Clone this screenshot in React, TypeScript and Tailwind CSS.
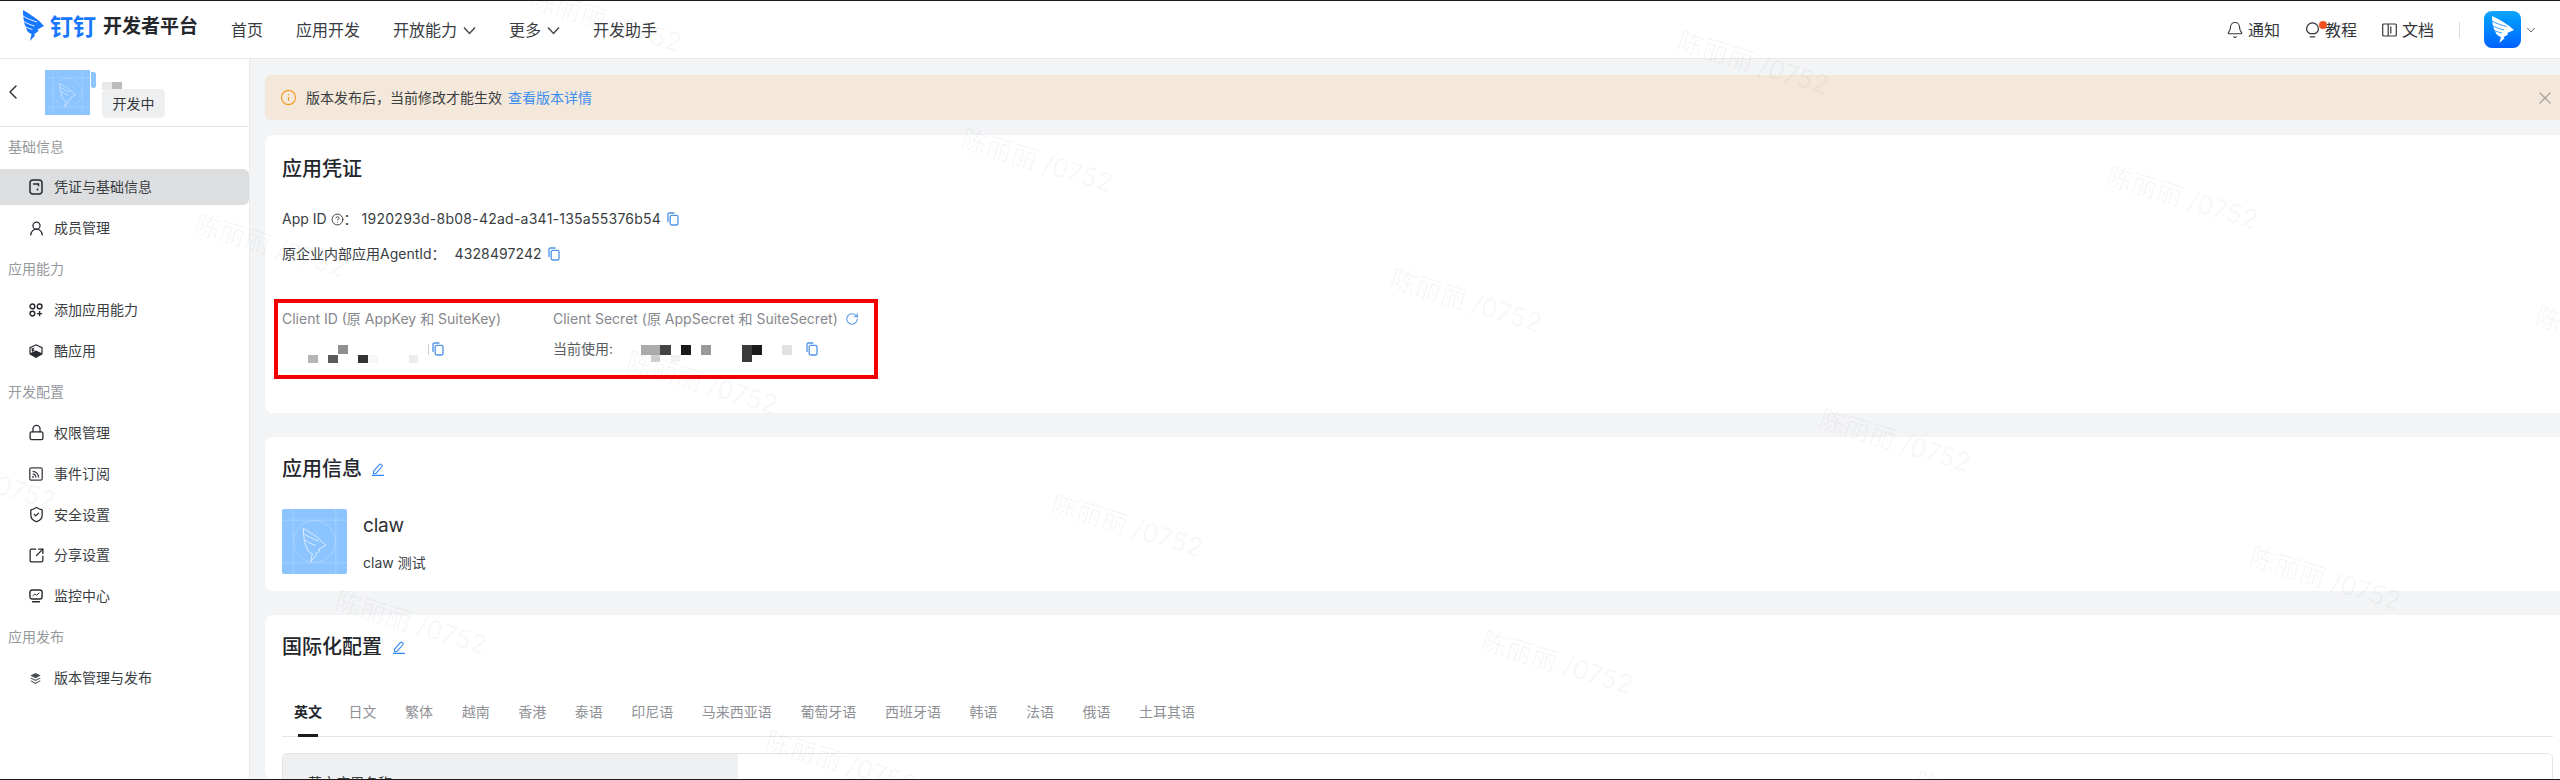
import React from "react";
import { Bell, ChevronLeft, CircleHelp, Info, Lock, RotateCw, ShieldCheck, SquareArrowOutUpRight, UserRound, X } from "lucide-react";

const wing = "M0 0C7 4 15 9 21 16L14.5 19.5L15.5 21L11 24.5L12 25.5L7 31L8.5 24C5.5 23 4 21 3.5 19C2.5 17 1.5 14 1 11.5C.3 7.5 0 3.5 0 0Z";
const slits = "M-1 5.5C4 8.5 9 10.5 14 12M0 11C4 13.5 8 15 11.5 16M2 16.5C4.5 18 7 19 9.5 19.5";

function Wing({ className, fill, cut }: { className: string; fill: string; cut: string }) {
  return (
    <svg viewBox="0 0 21 31" className={className} preserveAspectRatio="none">
      <path d={wing} fill={fill} />
      <path d={slits} fill="none" stroke={cut} strokeWidth=".9" />
    </svg>
  );
}

function Tile({ className }: { className: string }) {
  return (
    <svg viewBox="0 0 64 64" className={className}>
      <rect width="64" height="64" fill="#8cc4ff" />
      <g stroke="#ffffff" strokeOpacity=".28" strokeWidth=".8" fill="none">
        <path d="M11 0V64M53 0V64M0 11H64M0 53H64" />
        <circle cx="32" cy="32" r="20.5" />
      </g>
      <g transform="translate(21 19) scale(1.05)" stroke="#ffffff" strokeOpacity=".7" strokeWidth=".9" fill="none">
        <path d={wing} />
        <path d="M1 5.5C5 8 9 10 14 12M1.5 11C5 13.5 8 15 11.5 16" />
      </g>
    </svg>
  );
}

function Caret({ className, color }: { className: string; color: string }) {
  return (
    <svg viewBox="0 0 13 9" className={className} fill="none" stroke={color} strokeWidth="1.4">
      <path d="M1 1.5 6.5 7.5 12 1.5" />
    </svg>
  );
}

function CopyIcon() {
  return (
    <svg viewBox="0 0 12 14" className="h-[14px] w-[12px] shrink-0" fill="none" stroke="#4f93e6" strokeWidth="1.3">
      <path d="M1 9.5V2.2C1 1.5 1.5 1 2.2 1H7" strokeLinecap="round" />
      <rect x="3.2" y="3.4" width="7.8" height="9.6" rx="1.6" />
    </svg>
  );
}

function EditIcon() {
  return (
    <svg viewBox="0 0 12 13" className="h-[13px] w-[12px] shrink-0" fill="none" stroke="#2f86f0" strokeWidth="1.1">
      <path d="M1.6 8.2 7.6 1.4c.4-.4 1-.4 1.4-.1l.9.8c.4.4.4 1 .1 1.4L4 10.3l-2.6.4z" strokeLinejoin="round" />
      <path d="M.5 12.4h11" strokeLinecap="round" />
    </svg>
  );
}

function CredIcon() {
  return (
    <svg viewBox="0 0 14 16" className="h-[16px] w-[14px]" fill="none" stroke="#26292e" strokeWidth="1.5">
      <rect x="1" y="1" width="12" height="14" rx="3" />
      <path d="M4 5h5.5v2.2" />
      <circle cx="8.5" cy="10.5" r="1" fill="#26292e" stroke="none" />
    </svg>
  );
}

function AddIcon() {
  return (
    <svg viewBox="0 0 14 14" className="h-[14px] w-[14px]" fill="none" stroke="#26292e" strokeWidth="1.4">
      <circle cx="3.4" cy="3.4" r="2.4" />
      <circle cx="10.6" cy="3.4" r="2.4" />
      <circle cx="3.4" cy="10.6" r="2.4" />
      <path d="M10.6 8v5.2M8 10.6h5.2" />
    </svg>
  );
}

function CubeIcon() {
  return (
    <svg viewBox="0 0 14 14" className="h-[14px] w-[14px]">
      <path d="M7 .8 13 3.6V10L7 13.2 1 10V3.6z" fill="none" stroke="#26292e" strokeWidth="1.2" />
      <path d="M1 9.2 7 6.6 13 9.2V10L7 13.2 1 10z" fill="#26292e" />
      <path d="M2.5 4.5 5.8 3.4 4.2 5.6 6 6 3 8z" fill="#26292e" />
    </svg>
  );
}

function RssIcon() {
  return (
    <svg viewBox="0 0 14 14" className="h-[14px] w-[14px]" fill="none" stroke="#3a3d42" strokeWidth="1.3">
      <rect x=".8" y=".8" width="12.4" height="12.4" rx="1.6" />
      <path d="M3.6 4.4c3.3 0 6 2.7 6 6M3.6 7.2c1.8 0 3.2 1.4 3.2 3.2" />
      <circle cx="4" cy="10" r=".9" fill="#3a3d42" stroke="none" />
    </svg>
  );
}

function MonitorIcon() {
  return (
    <svg viewBox="0 0 14 14" className="h-[14px] w-[14px]" fill="none" stroke="#26292e" strokeWidth="1.4">
      <rect x=".9" y="1" width="12.2" height="9" rx="2.2" />
      <path d="M3.6 7 5.8 5l1.6 1.2L10.4 3.8" strokeWidth="1" />
      <path d="M3.5 12.8h7" strokeLinecap="round" />
    </svg>
  );
}

function LayersIcon() {
  return (
    <svg viewBox="0 0 14 14" className="h-[13px] w-[13px]" fill="#4a4d52">
      <path d="M7 1 12.6 3.8 7 6.6 1.4 3.8z" />
      <path d="M2.4 6.1 1.4 6.8 7 9.6l5.6-2.8-1-.7L7 8.3z" />
      <path d="M2.4 9.1 1.4 9.8 7 12.8l5.6-3-1-.7L7 11.5z" />
    </svg>
  );
}

function BookIcon() {
  return (
    <svg viewBox="0 0 15 14" className="h-[14px] w-[15px]" fill="none" stroke="#33363b" strokeWidth="1.2">
      <rect x=".7" y="1" width="13.6" height="12" rx="1" />
      <path d="M6.2 1v12M8.8 3.5v7" />
    </svg>
  );
}

function BulbIcon() {
  return (
    <svg viewBox="0 0 15 16" className="h-[16px] w-[15px]" fill="none" stroke="#33363b" strokeWidth="1.3">
      <path d="M5 11.6C2.8 10.700 1.600 8.800 1.600 6.800a5.900 5.900 0 0 1 11.800 0c0 2-1.200 3.900-3.400 4.800z" strokeLinejoin="round" />
      <path d="M5.300 14.800h4.400" strokeLinecap="round" />
    </svg>
  );
}

const ic = "-ml-[1.5px] h-[17px] w-[17px] text-[#26292e]";

const groups: { label: string; items: { text: string; icon: React.ReactNode; active?: boolean }[] }[] = [
  {
    label: "基础信息",
    items: [
      { text: "凭证与基础信息", icon: <CredIcon />, active: true },
      { text: "成员管理", icon: <UserRound className={ic} strokeWidth={1.8} /> },
    ],
  },
  {
    label: "应用能力",
    items: [
      { text: "添加应用能力", icon: <AddIcon /> },
      { text: "酷应用", icon: <CubeIcon /> },
    ],
  },
  {
    label: "开发配置",
    items: [
      { text: "权限管理", icon: <Lock className={ic} strokeWidth={1.8} /> },
      { text: "事件订阅", icon: <RssIcon /> },
      { text: "安全设置", icon: <ShieldCheck className={ic} strokeWidth={1.8} /> },
      { text: "分享设置", icon: <SquareArrowOutUpRight className={ic} strokeWidth={1.8} /> },
      { text: "监控中心", icon: <MonitorIcon /> },
    ],
  },
  {
    label: "应用发布",
    items: [{ text: "版本管理与发布", icon: <LayersIcon /> }],
  },
];

const tabs = ["英文", "日文", "繁体", "越南", "香港", "泰语", "印尼语", "马来西亚语", "葡萄牙语", "西班牙语", "韩语", "法语", "俄语", "土耳其语"];

const marks = [
  [606, 20], [1037, 160], [1466, 300], [1895, 440], [2325, 578],
  [1753, 62], [2182, 197], [2611, 337],
  [270, 245], [702, 382], [1127, 525], [1557, 662], [1990, 803],
  [-20, 478], [411, 622], [841, 762],
];

function NavItem({ text, caret }: { text: string; caret?: boolean }) {
  return (
    <div className="flex items-center gap-[6px]">
      <span>{text}</span>
      {caret && <Caret className="mt-[2px] h-[9px] w-[13px]" color="#44474c" />}
    </div>
  );
}

function ToolItem({ icon, text }: { icon: React.ReactNode; text: string }) {
  return (
    <div className="relative flex items-center gap-[5px]">
      {icon}
      <span>{text}</span>
    </div>
  );
}

export default function App() {
  return (
    <div className="relative h-[780px] w-[2560px] overflow-hidden border-y border-[#1c1c1c] bg-[#f3f4f6] font-['Inter','Noto_Sans_CJK_SC',sans-serif] text-[14px] leading-[22px] text-[#3a3d42]">
      <header className="flex h-[58px] items-center border-b border-[#e8e9eb] bg-white pl-[23px] pr-[24px]">
        <div className="flex items-center">
          <Wing className="mb-[8px] h-[31px] w-[21px]" fill="#1677ff" cut="#ffffff" />
          <span className="mb-[5px] ml-[6px] text-[23px] leading-[28px] font-bold tracking-[0px] text-[#1677ff]">钉钉</span>
          <span className="mb-[5px] ml-[7px] text-[19px] leading-[28px] font-semibold text-[#23262b]">开发者平台</span>
        </div>
        <nav className="ml-[33px] flex items-center gap-[33px] text-[16px] text-[#3a3d42]">
          <NavItem text="首页" />
          <NavItem text="应用开发" />
          <NavItem text="开放能力" caret />
          <NavItem text="更多" caret />
          <NavItem text="开发助手" />
        </nav>
        <div className="ml-auto flex items-center gap-[25px] text-[16px] text-[#33363b]">
          <ToolItem icon={<Bell className="-mx-[1.5px] h-[18px] w-[18px]" strokeWidth={1.5} />} text="通知" />
          <div className="relative">
            <ToolItem icon={<BulbIcon />} text="教程" />
            <span className="absolute left-[14px] top-[2px] h-[8px] w-[8px] rounded-full bg-[#f4511e]" />
          </div>
          <ToolItem icon={<BookIcon />} text="文档" />
          <div className="flex items-center">
            <span className="h-[16px] w-px bg-[#d9dadc]" />
            <div className="ml-[24px] flex h-[37px] w-[37px] items-center justify-center rounded-[8px] bg-gradient-to-b from-[#12a5ff] to-[#0060ff]">
              <Wing className="h-[27px] w-[22px]" fill="#ffffff" cut="#1f8cff" />
            </div>
            <Caret className="ml-[5px] h-[6px] w-[10px]" color="#55585d" />
          </div>
        </div>
      </header>

      <div className="flex h-[720px]">
        <aside className="h-full w-[250px] shrink-0 border-r border-[#e9eaec] bg-white">
          <div className="flex h-[68px] border-b border-[#e4e5e7] pl-[1px]">
            <ChevronLeft className="mt-[21px] h-[24px] w-[24px] text-[#33363b]" strokeWidth={1.5} />
            <div className="ml-[20px] mt-[11px] flex items-start">
              <Tile className="h-[45px] w-[45px]" />
              <span className="ml-px mt-[2px] h-[16px] w-[5px] rounded-r-full rounded-bl-full bg-[#8cc4ff]" />
              <div className="ml-[6px] flex flex-col">
                <div className="mt-[12px] flex h-[8px] w-[20px]">
                  <span className="h-full w-1/2 bg-[#e8e8e8]" />
                  <span className="h-full w-1/2 bg-[#bcbcbc]" />
                </div>
                <span className="-mt-px flex h-[29px] w-[63px] items-center justify-center rounded-[5px] bg-[#eeeff1] text-[#33363b]">开发中</span>
              </div>
            </div>
          </div>
          <nav className="flex flex-col gap-[4.9px] pt-[1.5px]">
            {groups.map((g) => (
              <React.Fragment key={g.label}>
                <div className="flex h-[36px] items-center pl-[8px] text-[#96999e]">{g.label}</div>
                {g.items.map((it) => (
                  <div
                    key={it.text}
                    className={`flex h-[36px] items-center rounded-r-[6px] pl-[29px] ${it.active ? "bg-[#dddee0]" : ""}`}
                  >
                    <span className="flex w-[25px] shrink-0 items-center">{it.icon}</span>
                    <span className="text-[#3a3d42]">{it.text}</span>
                  </div>
                ))}
              </React.Fragment>
            ))}
          </nav>
        </aside>

        <main className="flex min-w-0 flex-1 flex-col gap-[24px] overflow-hidden pl-[15px] pt-[16px]">
          <div className="-mb-[9px] flex h-[45px] shrink-0 items-center rounded-l-[6px] bg-[#f3e8d9] pl-[15px] pr-[5px]">
            <Info className="h-[17px] w-[17px] text-[#f59a23]" strokeWidth={1.6} />
            <span className="ml-[9px]">版本发布后，当前修改才能生效</span>
            <span className="ml-[6px] text-[#3d8ef0]">查看版本详情</span>
            <X className="ml-auto h-[20px] w-[20px] text-[#a9a49c]" strokeWidth={1.5} />
          </div>

          <section className="h-[278px] shrink-0 rounded-l-[8px] bg-white pl-[17px] pt-[20px]">
            <h2 className="text-[20px] font-medium leading-[28px] text-[#23262b]">应用凭证</h2>
            <div className="mt-[25px] flex h-[22px] items-center">
              <span>App ID</span>
              <CircleHelp className="ml-[4px] h-[13px] w-[13px]" strokeWidth={1.8} />
              <span className="w-[18px]">：</span>
              <span className="tracking-[0.25px]">1920293d-8b08-42ad-a341-135a55376b54</span>
              <span className="ml-[6px]"><CopyIcon /></span>
            </div>
            <div className="mt-[13px] flex h-[22px] items-center">
              <span>原企业内部应用AgentId：</span>
              <span className="ml-[9px] tracking-[0.1px]">4328497242</span>
              <span className="ml-[6px]"><CopyIcon /></span>
            </div>
            <div className="-ml-[8px] mt-[34px] h-[80px] w-[604px] border-4 border-[#f40000] pl-[4px] pt-[6px]">
              <div className="flex h-[20px] items-center text-[#85888d]">
                <span className="w-[271px]">Client ID (原 AppKey 和 SuiteKey)</span>
                <span>Client Secret (原 AppSecret 和 SuiteSecret)</span>
                <RotateCw className="ml-[7px] h-[14px] w-[14px] text-[#4f93e6]" strokeWidth={1.8} />
              </div>
              <div className="mt-[13px] flex h-[24px] items-start">
                <div className="flex w-[271px]">
                  <svg viewBox="0 0 150 24" className="h-[24px] w-[150px] shrink-0">
                    <rect x="56" y="3" width="10" height="9" fill="#8f8f8f" />
                    <rect x="26" y="13" width="10" height="8" fill="#b5b5b5" />
                    <rect x="46" y="13" width="10" height="8" fill="#5c5c5c" />
                    <rect x="76" y="13" width="10" height="8" fill="#333333" />
                    <rect x="127" y="13" width="9" height="8" fill="#eeeeee" />
                    <rect x="86" y="13" width="10" height="8" fill="#f7f7f7" />
                    <rect x="146" y="2" width="1" height="11" fill="#cccccc" />
                  </svg>
                  <CopyIcon />
                </div>
                <span className="w-[60px] whitespace-nowrap leading-[14px] text-[#5a5d62]">当前使用:</span>
                <div className="flex">
                  <svg viewBox="0 0 193 24" className="h-[24px] w-[193px] shrink-0">
                    <rect x="28" y="3" width="19" height="10" fill="#ababab" />
                    <rect x="38" y="13" width="9" height="7" fill="#cfcfcf" />
                    <rect x="47" y="3" width="11" height="10" fill="#444444" />
                    <rect x="58" y="13" width="9" height="7" fill="#f1f1f1" />
                    <rect x="68" y="3" width="10" height="10" fill="#1a1a1a" />
                    <rect x="88" y="3" width="10" height="10" fill="#999999" />
                    <rect x="129" y="3" width="10" height="17" fill="#3a3a3a" />
                    <rect x="139" y="3" width="10" height="10" fill="#1a1a1a" />
                    <rect x="169" y="3" width="10" height="10" fill="#e2e2e2" />
                  </svg>
                  <CopyIcon />
                </div>
              </div>
            </div>
          </section>

          <section className="h-[154px] shrink-0 rounded-l-[8px] bg-white pl-[17px] pt-[18px]">
            <div className="flex items-center gap-[10px]">
              <h2 className="text-[20px] font-medium leading-[28px] text-[#23262b]">应用信息</h2>
              <EditIcon />
            </div>
            <div className="mt-[26px] flex gap-[16px]">
              <Tile className="h-[65px] w-[65px] rounded-[2px]" />
              <div className="flex flex-col pt-[3px]">
                <span className="text-[19px] leading-[28px] tracking-[-0.2px] text-[#2b2e33]">claw</span>
                <span className="mt-[12px]">claw 测试</span>
              </div>
            </div>
          </section>

          <section className="min-h-0 flex-1 overflow-hidden rounded-l-[8px] bg-white pl-[17px] pr-[7px] pt-[18px]">
            <div className="flex items-center gap-[11px]">
              <h2 className="text-[20px] font-medium leading-[28px] text-[#23262b]">国际化配置</h2>
              <EditIcon />
            </div>
            <div className="mt-[31px] flex border-b border-[#e4e5e7] pl-[12px]">
              <div className="flex gap-[28.55px]">
                {tabs.map((t, i) => (
                  <div key={t} className={`relative h-[44px] pt-[9px] ${i === 0 ? "-mr-[2px] font-semibold text-[#23262b]" : "text-[#8f9196]"}`}>
                    {t}
                    {i === 0 && <span className="absolute bottom-[-1px] left-[4px] h-[3px] w-[20px] bg-[#1c1c1c]" />}
                  </div>
                ))}
              </div>
            </div>
            <div className="mt-[16px] flex h-[120px] rounded-t-[5px] border border-[#e4e5e7]">
              <div className="w-[455px] bg-[#eff0f2] pl-[25px] pt-[18px]">英文应用名称</div>
              <div className="flex-1" />
            </div>
          </section>
        </main>
      </div>

      {marks.map(([x, y]) => (
        <span
          key={`${x}-${y}`}
          className="pointer-events-none absolute -translate-x-1/2 -translate-y-1/2 rotate-[17deg] whitespace-nowrap text-[26px] leading-[30px] text-black/[0.045]"
          style={{ left: x, top: y }}
        >
          陈丽丽 /0752
        </span>
      ))}
    </div>
  );
}
